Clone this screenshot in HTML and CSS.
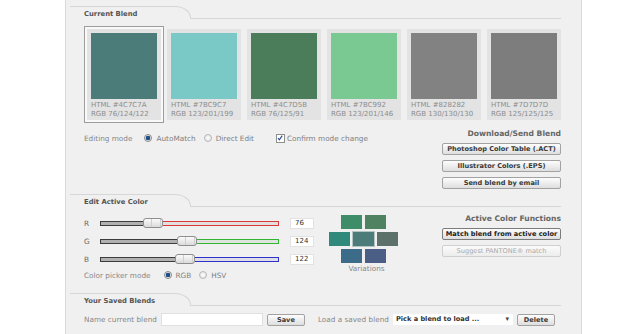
FILE: index.html
```html
<!DOCTYPE html>
<html lang="en">
<head>
    <meta charset="UTF-8">
    <title>Color Blender</title>
    <link rel="stylesheet" href="styles.css">
</head>
<body>
    <div class="panel">
        <div class="section-head">
            <div class="tab">Current Blend</div>
            <div class="rule"></div>
        </div>

        <div class="swatches">
            <div class="card selected">
                <div class="chip" style="background:#4C7C7A"></div>
                <div class="codes">HTML #4C7C7A<br>RGB 76/124/122</div>
            </div>
            <div class="card">
                <div class="chip" style="background:#7BC9C7"></div>
                <div class="codes">HTML #7BC9C7<br>RGB 123/201/199</div>
            </div>
            <div class="card">
                <div class="chip" style="background:#4C7D5B"></div>
                <div class="codes">HTML #4C7D5B<br>RGB 76/125/91</div>
            </div>
            <div class="card">
                <div class="chip" style="background:#7BC992"></div>
                <div class="codes">HTML #7BC992<br>RGB 123/201/146</div>
            </div>
            <div class="card">
                <div class="chip" style="background:#828282"></div>
                <div class="codes">HTML #828282<br>RGB 130/130/130</div>
            </div>
            <div class="card">
                <div class="chip" style="background:#7D7D7D"></div>
                <div class="codes">HTML #7D7D7D<br>RGB 125/125/125</div>
            </div>
        </div>

        <div class="blend-tools">
            <div class="mode-row">
                <span class="label">Editing mode</span>
                <span class="opt first"><span class="radio on"></span>AutoMatch</span>
                <span class="opt"><span class="radio"></span>Direct Edit</span>
                <span class="opt confirm">
                    <span class="check">
                        <svg width="8" height="8" viewBox="0 0 8 8"><path d="M2 4.2 L3.4 5.8 L6.2 1.6" fill="none" stroke="#2a4f9a" stroke-width="1.2"/></svg>
                    </span>Confirm mode change
                </span>
            </div>
            <div class="actions">
                <div class="actions-title">Download/Send Blend</div>
                <button class="btn">Photoshop Color Table (.ACT)</button>
                <button class="btn">Illustrator Colors (.EPS)</button>
                <button class="btn">Send blend by email</button>
            </div>
        </div>

        <div class="section-head">
            <div class="tab">Edit Active Color</div>
            <div class="rule"></div>
        </div>

        <div class="edit-body">
            <div class="sliders">
                <div class="slider-row">
                    <span class="axis">R</span>
                    <div class="track red">
                        <div class="done" style="width:43px"></div>
                        <div class="thumb"></div>
                        <div class="rest"></div>
                    </div>
                    <div class="value">76</div>
                </div>
                <div class="slider-row">
                    <span class="axis">G</span>
                    <div class="track green">
                        <div class="done" style="width:77px"></div>
                        <div class="thumb"></div>
                        <div class="rest"></div>
                    </div>
                    <div class="value">124</div>
                </div>
                <div class="slider-row">
                    <span class="axis">B</span>
                    <div class="track blue">
                        <div class="done" style="width:75px"></div>
                        <div class="thumb"></div>
                        <div class="rest"></div>
                    </div>
                    <div class="value">122</div>
                </div>
                <div class="picker-row">
                    <span class="label">Color picker mode</span>
                    <span class="opt first"><span class="radio on"></span>RGB</span>
                    <span class="opt"><span class="radio"></span>HSV</span>
                </div>
            </div>

            <div class="variations">
                <div class="var-row offset">
                    <div class="var" style="background:#3f8c68"></div>
                    <div class="var" style="background:#4f8260"></div>
                </div>
                <div class="var-row">
                    <div class="var" style="background:#2f8a7c"></div>
                    <div class="var active" style="background:#4C7C7A"></div>
                    <div class="var" style="background:#5b7169"></div>
                </div>
                <div class="var-row offset">
                    <div class="var" style="background:#3d6c8b"></div>
                    <div class="var" style="background:#4b5f86"></div>
                </div>
                <div class="var-label">Variations</div>
            </div>

            <div class="actions edit-actions">
                <div class="actions-title">Active Color Functions</div>
                <button class="btn strong">Match blend from active color</button>
                <button class="btn" disabled>Suggest PANTONE® match</button>
            </div>
        </div>

        <div class="section-head saved-head">
            <div class="tab">Your Saved Blends</div>
            <div class="rule"></div>
        </div>

        <div class="saved-row">
            <span class="label">Name current blend</span>
            <input class="name-input" type="text">
            <button class="btn small">Save</button>
            <span class="label load">Load a saved blend</span>
            <div class="pick">Pick a blend to load ...<span class="arrow">▾</span></div>
            <button class="btn small">Delete</button>
        </div>
    </div>
</body>
</html>
```

FILE: styles.css
```css
body {
    margin: 0;
    background-color: #fff;
    font-family: "DejaVu Sans", Verdana, sans-serif;
    font-size: 7.3px;
    color: #888;
}

.panel {
    width: 477px;
    min-height: 328px;
    margin-left: 65px;
    padding: 6px 20px 0 18px;
    background-color: #f0f0f0;
    border-left: 1px solid #d9d9d9;
    border-right: 1px solid #d9d9d9;
}

/* section header with the little tab */
.section-head {
    display: flex;
    height: 13px;
    margin-left: -14px;
}

.tab {
    width: 106px;
    height: 12px;
    padding-left: 14px;
    border-top: 1px solid #d6d6d6;
    border-right: 1px solid #d6d6d6;
    border-top-right-radius: 16px 12px;
    font-size: 6.8px;
    font-weight: bold;
    line-height: 15px;
    color: #555;
}

.rule {
    flex: 1;
    border-bottom: 1px solid #d6d6d6;
}

.saved-head {
    margin-top: 11px;
}

/* current blend swatches */
.swatches {
    display: flex;
    gap: 6px;
    margin: 10px 0 0 3px;
}

.card {
    width: 66px;
    padding: 4px 4px 1px;
    background-color: #e3e3e3;
}

.card.selected {
    box-shadow: 0 0 0 2px #f9f9f9, 0 0 0 3px #9d9d9d;
}

.chip {
    height: 66px;
}

.codes {
    margin-top: 2px;
    font-size: 7px;
    line-height: 9px;
    color: #8c8c8c;
    white-space: nowrap;
}

.blend-tools {
    display: flex;
    justify-content: space-between;
    margin-top: 8px;
}

.mode-row, .picker-row {
    display: flex;
    align-items: center;
    height: 12px;
    margin-top: 4px;
}

.opt {
    display: flex;
    align-items: center;
    margin-left: 8px;
    color: #808080;
}

.opt.first {
    margin-left: 12px;
}

.opt.confirm {
    margin-left: 22px;
}

.radio {
    width: 6px;
    height: 6px;
    margin-right: 4px;
    border: 1px solid #b8b8b8;
    border-radius: 50%;
    background: radial-gradient(circle, #fff 0, #dcdcdc 100%);
}

.radio.on {
    border-color: #8a8a8a;
    background: radial-gradient(circle, #1d4f86 0, #1d4f86 2px, #e8e8e8 2.6px);
}

.check {
    display: flex;
    width: 7px;
    height: 7px;
    margin-right: 2px;
    border: 1px solid #8f8f8f;
    background-color: #fff;
}

.check svg {
    margin: -1px 0 0 -1px;
}

.actions {
    display: flex;
    flex-direction: column;
    width: 119px;
}

.actions-title {
    margin-bottom: 4px;
    text-align: right;
    font-size: 7.6px;
    font-weight: bold;
    line-height: 11px;
    color: #666;
}

.btn {
    height: 12px;
    margin-bottom: 5px;
    padding: 0;
    border: 1px solid #a2a2a2;
    border-radius: 2px;
    background: linear-gradient(#fdfdfd, #dedede);
    font-family: "DejaVu Sans", Verdana, sans-serif;
    font-size: 6.6px;
    font-weight: bold;
    line-height: 10px;
    color: #3a3a3a;
}

.btn.strong {
    border-color: #7c7c7c;
    color: #222;
}

.btn[disabled] {
    border-color: #cfcfcf;
    background: linear-gradient(#fbfbfb, #ececec);
    font-weight: normal;
    color: #a8a8a8;
}

/* edit active color */
.edit-body {
    display: flex;
    margin-top: 7px;
}

.sliders {
    width: 231px;
}

.slider-row {
    display: flex;
    align-items: center;
    height: 18px;
}

.axis {
    width: 16px;
    color: #666;
}

.track {
    display: flex;
    align-items: center;
    width: 179px;
    height: 10px;
}

.done, .rest {
    box-sizing: border-box;
    height: 5px;
}

.done {
    border: 1px solid #3c3c3c;
    border-right: 0;
    background-color: #b0b0b0;
}

.rest {
    flex: 1;
    border: 1px solid #d83a3a;
    border-left: 0;
    background-color: #e4dede;
}

.green .rest {
    border-color: #33b433;
    background-color: #dee4de;
}

.blue .rest {
    border-color: #3030cc;
    background-color: #dedee6;
}

.thumb {
    box-sizing: border-box;
    width: 20px;
    height: 10px;
    border: 1px solid #8e8e8e;
    border-radius: 3px;
    background: repeating-linear-gradient(90deg, transparent 0 7px, #cfcfcf 7px 8px, transparent 8px 9px) , linear-gradient(#fbfbfb, #dadada);
}

.value {
    box-sizing: border-box;
    width: 24px;
    height: 11px;
    margin-left: 11px;
    padding-left: 4px;
    border: 1px solid #e2e2e2;
    background-color: #fff;
    font-size: 7px;
    line-height: 9px;
    color: #333;
}

.picker-row {
    height: 14px;
    margin-top: 0;
}

.picker-row .opt.first {
    margin-left: 13px;
}

.variations {
    width: 69px;
    margin: 1px 0 0 14px;
}

.var-row {
    display: flex;
    gap: 3px;
    margin-bottom: 3px;
}

.var-row.offset {
    padding-left: 12px;
}

.var {
    width: 21px;
    height: 14px;
}

.var.active {
    box-shadow: 0 0 0 1px #b4c4c2;
}

.var-label {
    margin-top: -3px;
    padding-left: 6px;
    text-align: center;
    line-height: 12px;
    color: #888;
}

.edit-actions {
    margin: -1px 0 0 auto;
}

/* saved blends */
.saved-row {
    display: flex;
    align-items: center;
    height: 13px;
    margin-top: 7px;
}

.name-input {
    box-sizing: border-box;
    width: 102px;
    height: 13px;
    margin: 0 4px;
    border: 1px solid #e0e0e0;
    background-color: #fff;
}

.btn.small {
    width: 38px;
    margin: 0;
}

.label.load {
    margin: 0 4px 0 13px;
}

.pick {
    display: flex;
    justify-content: space-between;
    box-sizing: border-box;
    width: 120px;
    height: 11px;
    margin-right: 4px;
    padding: 0 4px 0 3px;
    background-color: #fff;
    font-size: 6.6px;
    font-weight: bold;
    line-height: 11px;
    color: #333;
}

.arrow {
    font-size: 7px;
    color: #444;
}
```
